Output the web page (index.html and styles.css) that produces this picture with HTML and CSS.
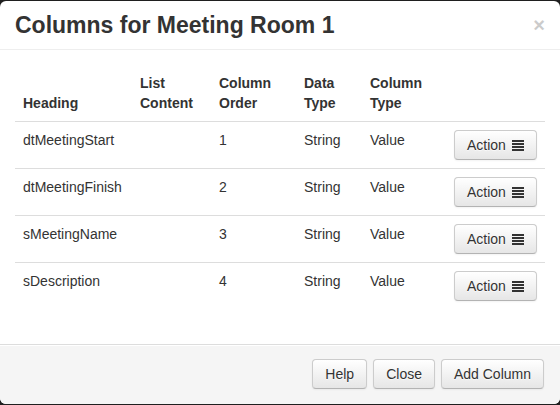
FILE: index.html
```html
<!DOCTYPE html>
<html lang="en">
<head>
  <title>Columns</title>
  <link rel="stylesheet" href="styles.css">
</head>
<body>
  <div class="modal">
    <div class="modal-header">
      <h3>Columns for Meeting Room 1</h3>
      <button class="close" type="button">&times;</button>
    </div>

    <div class="modal-body">
      <table class="cols-table">
        <colgroup>
          <col class="c-heading">
          <col class="c-list">
          <col class="c-order">
          <col class="c-data">
          <col class="c-type">
          <col class="c-action">
        </colgroup>
        <thead>
          <tr>
            <th>Heading</th>
            <th>List<br>Content</th>
            <th>Column<br>Order</th>
            <th>Data<br>Type</th>
            <th>Column<br>Type</th>
            <th></th>
          </tr>
        </thead>
        <tbody>
          <tr>
            <td>dtMeetingStart</td><td></td><td>1</td><td>String</td><td>Value</td>
            <td><button class="btn btn-action">Action <svg class="icon" width="12" height="11" viewBox="0 0 12 11"><rect y="0" width="12" height="2"/><rect y="3" width="12" height="2"/><rect y="6" width="12" height="2"/><rect y="9" width="12" height="2"/></svg></button></td>
          </tr>
          <tr>
            <td>dtMeetingFinish</td><td></td><td>2</td><td>String</td><td>Value</td>
            <td><button class="btn btn-action">Action <svg class="icon" width="12" height="11" viewBox="0 0 12 11"><rect y="0" width="12" height="2"/><rect y="3" width="12" height="2"/><rect y="6" width="12" height="2"/><rect y="9" width="12" height="2"/></svg></button></td>
          </tr>
          <tr>
            <td>sMeetingName</td><td></td><td>3</td><td>String</td><td>Value</td>
            <td><button class="btn btn-action">Action <svg class="icon" width="12" height="11" viewBox="0 0 12 11"><rect y="0" width="12" height="2"/><rect y="3" width="12" height="2"/><rect y="6" width="12" height="2"/><rect y="9" width="12" height="2"/></svg></button></td>
          </tr>
          <tr>
            <td>sDescription</td><td></td><td>4</td><td>String</td><td>Value</td>
            <td><button class="btn btn-action">Action <svg class="icon" width="12" height="11" viewBox="0 0 12 11"><rect y="0" width="12" height="2"/><rect y="3" width="12" height="2"/><rect y="6" width="12" height="2"/><rect y="9" width="12" height="2"/></svg></button></td>
          </tr>
        </tbody>
      </table>
    </div>

    <div class="modal-footer">
      <button class="btn">Help</button>
      <button class="btn">Close</button>
      <button class="btn">Add Column</button>
    </div>
  </div>
</body>
</html>
```

FILE: styles.css
```css
body{
    margin: 0;
    padding-top: 1px;
    background-color: #1f1f1f;
    font-family: "Liberation Sans", Arial, sans-serif;
    font-size: 14px;
    line-height: 20px;
    color: #333;
}
.modal{
    width: 560px;
    height: 403px;
    background-color: #fff;
    border-radius: 6px;
    overflow: hidden;
    display: flex;
    flex-direction: column;
}
.modal-header{
    padding: 9px 15px;
    border-bottom: 1px solid #eee;
    display: flex;
    justify-content: space-between;
    align-items: flex-start;
}
.modal-header h3{
    margin: 0;
    font-size: 23px;
    line-height: 30px;
    font-weight: bold;
    color: #333;
}
.close{
    border: 0;
    background: none;
    padding: 0;
    margin-top: 5px;
    font-family: "Liberation Sans", Arial, sans-serif;
    font-size: 20px;
    font-weight: bold;
    line-height: 20px;
    color: #000;
    opacity: 0.2;
}
.modal-body{
    padding: 15px;
    flex: 1;
}
.cols-table{
    width: 530px;
    table-layout: fixed;
    border-collapse: collapse;
    border-spacing: 0;
    margin-bottom: 20px;
}
.c-heading{ width: 117px; }
.c-list{ width: 79px; }
.c-order{ width: 85px; }
.c-data{ width: 66px; }
.c-type{ width: 84px; }
.c-action{ width: 99px; }
.cols-table th{
    padding: 8px;
    text-align: left;
    vertical-align: bottom;
    font-weight: bold;
}
.cols-table td{
    padding: 8px;
    text-align: left;
    vertical-align: top;
    border-top: 1px solid #ddd;
}
.btn{
    display: inline-flex;
    align-items: center;
    gap: 4px;
    padding: 4px 12px;
    height: 30px;
    font-family: "Liberation Sans", Arial, sans-serif;
    font-size: 14px;
    line-height: 20px;
    color: #333;
    text-shadow: 0 1px 1px rgba(255,255,255,0.75);
    background-color: #f5f5f5;
    background-image: linear-gradient(to bottom, #fff, #e6e6e6);
    border: 1px solid #ccc;
    border-bottom-color: #b3b3b3;
    border-radius: 4px;
    box-shadow: inset 0 1px 0 rgba(255,255,255,0.2), 0 1px 2px rgba(0,0,0,0.05);
}
.btn-action{
    gap: 6px;
}
.icon{
    fill: #333;
}
.modal-footer{
    padding: 14px 16px 15px 15px;
    background-color: #f5f5f5;
    border-top: 1px solid #ddd;
    box-shadow: inset 0 1px 0 #fff;
    display: flex;
    justify-content: flex-end;
    gap: 6px;
}
```
